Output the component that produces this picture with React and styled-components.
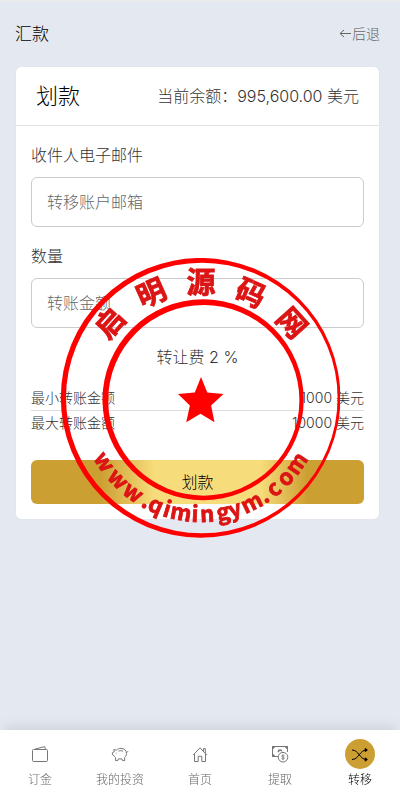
import React, { useState } from 'react';
import styled, { createGlobalStyle } from 'styled-components';

const GlobalStyle = createGlobalStyle`
  * {
    box-sizing: border-box;
  }
  body {
    margin: 0;
    background: #e4e8f0;
    color: #333;
    font-family: Inter, 'Noto Sans CJK SC', sans-serif;
    font-size: 16px;
    font-weight: 300;
    line-height: 24px;
  }
`;

const Page = styled.div`
  min-height: 100vh;
  padding: 0 20px 76px 15px;
  border-top: 2px solid #e9eaec;
`;

const TopBar = styled.header`
  display: flex;
  align-items: center;
  justify-content: space-between;
  height: 64px;
`;

const PageTitle = styled.h1`
  margin: 0;
  font-size: 17px;
  font-weight: 300;
  color: #000;
`;

const BackLink = styled.a`
  display: flex;
  align-items: center;
  gap: 1px;
  font-size: 14px;
  color: #666;
  text-decoration: none;
`;

const Card = styled.section`
  background: #fff;
  background-clip: padding-box;
  border: 1px solid #e2e6ed;
  border-radius: 6px;
`;

const CardHeader = styled.div`
  display: flex;
  align-items: center;
  justify-content: space-between;
  height: 59px;
  padding: 0 20px;
  border-bottom: 1px solid #e3e3e3;
`;

const CardTitle = styled.h2`
  margin: 0;
  font-size: 22px;
  font-weight: 300;
  color: #000;
`;

const Form = styled.form`
  display: flex;
  flex-direction: column;
  gap: 17px;
  padding: 17px 15px 15px;
`;

const Field = styled.div`
  display: flex;
  flex-direction: column;
  gap: 10px;
`;

const Input = styled.input`
  width: 100%;
  height: 50px;
  padding: 0 15px;
  border: 1px solid #ccc;
  border-radius: 6px;
  background: #fff;
  color: #333;
  font: inherit;
  &::placeholder {
    color: #666;
    opacity: 1;
  }
`;

const Fee = styled.p`
  margin: 0;
  text-align: center;
`;

const Limits = styled.dl`
  margin: 0 0 8px;
  font-size: 14px;
`;

const LimitRow = styled.div`
  display: flex;
  justify-content: space-between;
  & + & {
    border-top: 1px solid #ddd;
  }
  dd {
    margin: 0;
  }
`;

const SubmitButton = styled.button`
  height: 44px;
  border: 0;
  border-radius: 6px;
  background: linear-gradient(90deg, #cc9f33 21%, #f7dc7b 37%, #f7dc7b 69%, #cc9f33 83%);
  color: #000;
  font: inherit;
  cursor: pointer;
`;

const BottomNav = styled.nav`
  position: fixed;
  left: 0;
  right: 0;
  bottom: 0;
  display: grid;
  grid-template-columns: repeat(5, 1fr);
  height: 66px;
  padding-top: 9px;
  background: #fff;
  box-shadow: 0 -10px 8px -4px #d5d9e1;
`;

const NavLink = styled.a`
  display: flex;
  flex-direction: column;
  align-items: center;
  color: ${({ $active }) => ($active ? '#000' : '#666')};
  font-size: 12px;
  line-height: 22px;
  text-decoration: none;
`;

const NavIcon = styled.span`
  display: grid;
  place-items: center;
  width: 30px;
  height: 30px;
  border-radius: 50%;
  color: ${({ $active }) => ($active ? '#000' : '#777')};
  background: ${({ $active }) => ($active ? '#cc9f33' : 'transparent')};
`;

const StampLayer = styled.div`
  position: fixed;
  inset: 0;
  z-index: 10;
  display: grid;
  place-items: center;
  pointer-events: none;
`;

const StampText = styled.text`
  fill: #dc1414;
  stroke: #dc1414;
  stroke-width: 0.8;
  font-family: 'Noto Sans CJK SC', sans-serif;
  font-size: ${({ $size }) => $size}px;
  font-weight: 700;
  text-anchor: middle;
`;

const Icon = ({ size = 18, children }) => (
  <svg width={size} height={size} viewBox="0 0 18 18" fill="none" stroke="currentColor" strokeWidth="1" aria-hidden="true">
    {children}
  </svg>
);

const WalletIcon = () => (
  <Icon>
    <rect x="1.5" y="4.5" width="15" height="12" rx="1" />
    <path d="M3.6 4.2 13.6 1.6 14.5 4.2" />
  </Icon>
);

const PiggyIcon = () => (
  <Icon>
    <path d="M3.2 6.8 2.8 4.6 5.3 5.1C6.5 4 8.2 3.4 10 3.4c3.2 0 5.5 2.1 5.5 5 0 1.9-.8 3.1-2 4.2l.2 3h-2.2l-.6-1.7H7.3l-.5 1.7H4.5l.1-2.9C3.7 12 3.2 11.3 3 10.6L1.4 9.8V7.7z" />
    <path d="M7.4 6.2c1.6-.7 3.2-.7 4.7 0M15.4 7.2c.8.2 1.4-.2 1.4-1M5.2 7.7v.8" />
  </Icon>
);

const HomeIcon = () => (
  <Icon>
    <path d="M2.2 10 9 2.8l6.8 7.2M3.5 8.8v7.7h3.7v-5.2h3.6v5.2h3.7V8.8M12.4 6V3.6h1.9V8" />
  </Icon>
);

const WithdrawIcon = () => (
  <Icon>
    <path d="M7 11.5H1.5v-10h15V7" />
    <path d="M1.5 4.2 4.2 1.5H1.5zM16.5 4.2l-2.7-2.7h2.7zM1.5 8.8l2.7 2.7H1.5z" fill="currentColor" />
    <path d="M7.6 7.2c-.4-1.4.3-2.2 1.4-2.2s1.7.6 1.4 1.4" strokeWidth="1.6" />
    <circle cx="12" cy="12.2" r="4.8" />
    <path d="M13.6 10.8c-1.1-.9-3-.6-3 .3 0 1.3 2.8.8 2.8 2 0 1.1-2 1.2-3 .3M12 9.4v5.6" strokeWidth="0.8" />
  </Icon>
);

const ShuffleIcon = () => (
  <Icon>
    <path d="M1 5c7 0 7.5 9.5 14.5 9.5M1 14.5C8 14.5 8.5 5 15.5 5" />
    <path d="M14.2 3.4 16.4 5 14.2 6.6zM14.2 12.9l2.2 1.6-2.2 1.6z" fill="currentColor" />
  </Icon>
);

const navItems = [
  { label: '订金', icon: WalletIcon },
  { label: '我的投资', icon: PiggyIcon },
  { label: '首页', icon: HomeIcon },
  { label: '提取', icon: WithdrawIcon },
  { label: '转移', icon: ShuffleIcon, active: true },
];

// [character, angle around the ring]
const topChars = [['启', -48], ['明', -24], ['源', 0], ['码', 24], ['网', 48]];
const bottomChars = [
  ['w', 57], ['w', 46], ['w', 36], ['.', 28], ['q', 23], ['i', 17], ['m', 10], ['i', 3],
  ['n', -3], ['g', -11], ['y', -17], ['m', -26], ['.', -33], ['c', -39], ['o', -47], ['m', -56],
];

const Stamp = () => (
  <StampLayer>
    <svg width="280" height="280" viewBox="0 0 280 280" role="img" aria-label="启明源码网 www.qimingym.com">
      <g fill="#f00" fillRule="evenodd">
        <path d="M.8 139.8a139.8 139.8 0 1 0 279.6 0a139.8 139.8 0 1 0-279.6 0zM6 140a135.8 135.3 0 1 0 271.6 0a135.8 135.3 0 1 0-271.6 0z" />
        <path d="M42.5 141.7a100.6 100.4 0 1 0 201.2 0a100.6 100.4 0 1 0-201.2 0zM48.2 142.3a95.6 95.3 0 1 0 191.2 0a95.6 95.3 0 1 0-191.2 0z" />
        <path d="M141 119l6.3 15.4 16.2 1.7-12.4 11.5 3.4 16.6-14-8.5-14.3 8.5 3.7-16.6L118 136.1l16.8-1.7z" />
      </g>
      {topChars.map(([char, angle]) => (
        <StampText key={char} $size={29} transform={`rotate(${angle} 141 147) translate(141 35)`}>
          {char}
        </StampText>
      ))}
      {bottomChars.map(([char, angle], i) => (
        <StampText key={i} $size={22} transform={`rotate(${angle} 141 141) translate(141 264)`}>
          {char}
        </StampText>
      ))}
    </svg>
  </StampLayer>
);

const App = () => {
  const [email, setEmail] = useState('');
  const [amount, setAmount] = useState('');

  return (
    <>
      <GlobalStyle />
      <Page>
        <TopBar>
          <PageTitle>汇款</PageTitle>
          <BackLink href="#">
            <svg width="12" height="10" viewBox="0 0 12 10" fill="none" stroke="currentColor" aria-hidden="true">
              <path d="M12 4.5H1M5 1 1 4.5l4 3.5" />
            </svg>
            后退
          </BackLink>
        </TopBar>
        <Card>
          <CardHeader>
            <CardTitle>划款</CardTitle>
            <span>当前余额：995,600.00 美元</span>
          </CardHeader>
          <Form onSubmit={(e) => e.preventDefault()}>
            <Field>
              <label htmlFor="email">收件人电子邮件</label>
              <Input id="email" type="email" placeholder="转移账户邮箱" value={email} onChange={(e) => setEmail(e.target.value)} />
            </Field>
            <Field>
              <label htmlFor="amount">数量</label>
              <Input id="amount" inputMode="decimal" placeholder="转账金额" value={amount} onChange={(e) => setAmount(e.target.value)} />
            </Field>
            <Fee>转让费 2 %</Fee>
            <Limits>
              <LimitRow>
                <dt>最小转账金额</dt>
                <dd>1000 美元</dd>
              </LimitRow>
              <LimitRow>
                <dt>最大转账金额</dt>
                <dd>10000 美元</dd>
              </LimitRow>
            </Limits>
            <SubmitButton type="submit">划款</SubmitButton>
          </Form>
        </Card>
      </Page>
      <BottomNav>
        {navItems.map(({ label, icon: ItemIcon, active }) => (
          <NavLink key={label} href="#" $active={active}>
            <NavIcon $active={active}>
              <ItemIcon />
            </NavIcon>
            {label}
          </NavLink>
        ))}
      </BottomNav>
      <Stamp />
    </>
  );
};

export default App;
